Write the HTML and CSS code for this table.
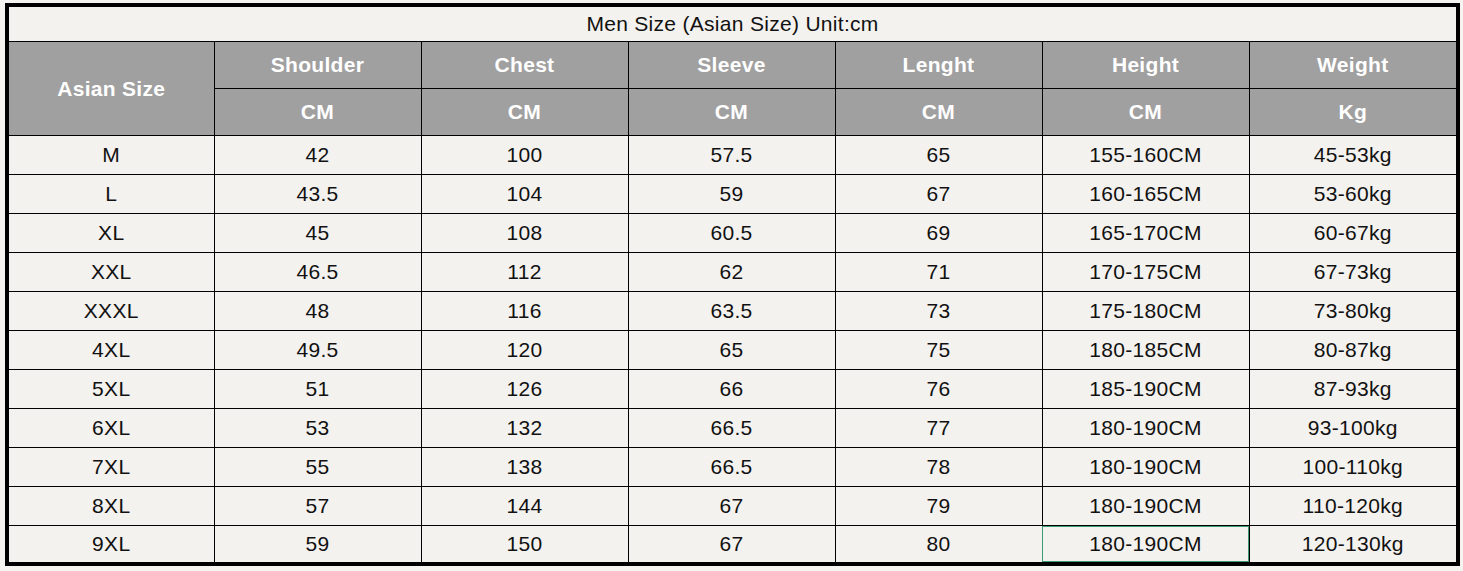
FILE: index.html
```html
<!DOCTYPE html>
<html>
<head>
<meta charset="utf-8">
<link rel="stylesheet" href="styles.css">
</head>
<body>
<div class="frame">
<table class="size-table">
  <colgroup>
    <col class="c-first"><col class="c"><col class="c"><col class="c"><col class="c"><col class="c"><col class="c">
  </colgroup>
  <tr class="title-row"><td colspan="7" class="title">Men Size (Asian Size) Unit:cm</td></tr>
  <tr class="head-row">
    <th rowspan="2">Asian Size</th>
    <th>Shoulder</th><th>Chest</th><th>Sleeve</th><th>Lenght</th><th>Height</th><th>Weight</th>
  </tr>
  <tr class="head-row">
    <th>CM</th><th>CM</th><th>CM</th><th>CM</th><th>CM</th><th>Kg</th>
  </tr>
  <tr><td>M</td><td>42</td><td>100</td><td>57.5</td><td>65</td><td>155-160CM</td><td>45-53kg</td></tr>
  <tr><td>L</td><td>43.5</td><td>104</td><td>59</td><td>67</td><td>160-165CM</td><td>53-60kg</td></tr>
  <tr><td>XL</td><td>45</td><td>108</td><td>60.5</td><td>69</td><td>165-170CM</td><td>60-67kg</td></tr>
  <tr><td>XXL</td><td>46.5</td><td>112</td><td>62</td><td>71</td><td>170-175CM</td><td>67-73kg</td></tr>
  <tr><td>XXXL</td><td>48</td><td>116</td><td>63.5</td><td>73</td><td>175-180CM</td><td>73-80kg</td></tr>
  <tr><td>4XL</td><td>49.5</td><td>120</td><td>65</td><td>75</td><td>180-185CM</td><td>80-87kg</td></tr>
  <tr><td>5XL</td><td>51</td><td>126</td><td>66</td><td>76</td><td>185-190CM</td><td>87-93kg</td></tr>
  <tr><td>6XL</td><td>53</td><td>132</td><td>66.5</td><td>77</td><td>180-190CM</td><td>93-100kg</td></tr>
  <tr><td>7XL</td><td>55</td><td>138</td><td>66.5</td><td>78</td><td>180-190CM</td><td>100-110kg</td></tr>
  <tr><td>8XL</td><td>57</td><td>144</td><td>67</td><td>79</td><td>180-190CM</td><td>110-120kg</td></tr>
  <tr class="last-row"><td>9XL</td><td>59</td><td>150</td><td>67</td><td>80</td><td class="selected">180-190CM</td><td>120-130kg</td></tr>
</table>
</div>
</body>
</html>
```

FILE: styles.css
```css
html, body {
  margin: 0;
  padding: 0;
  background: #f6f4f1;
}
body {
  padding: 3px 0 0 5px;
  font-family: "Liberation Sans", Arial, sans-serif;
}
.frame {
  width: 1447px;
  border: 4px solid #000;
  background: #f4f2ef;
}
.size-table {
  width: 1447px;
  border-collapse: collapse;
  border-style: hidden;
  table-layout: fixed;
}
.c-first { width: 205px; }
.c { width: 207px; }
.size-table td, .size-table th {
  border: 1px solid #000;
  padding: 0;
  text-align: center;
  vertical-align: middle;
  font-size: 21px;
  letter-spacing: 0.3px;
  color: #111;
  height: 38px;
}
.title-row td {
  height: 34px;
  color: #111;
}
.head-row th {
  background: #a0a0a0;
  color: #fff;
  font-weight: bold;
  height: 46px;
}
.last-row td {
  height: 36px;
}
.size-table td.selected {
  outline: 1px solid #3f9a73;
  outline-offset: -1px;
}
```
